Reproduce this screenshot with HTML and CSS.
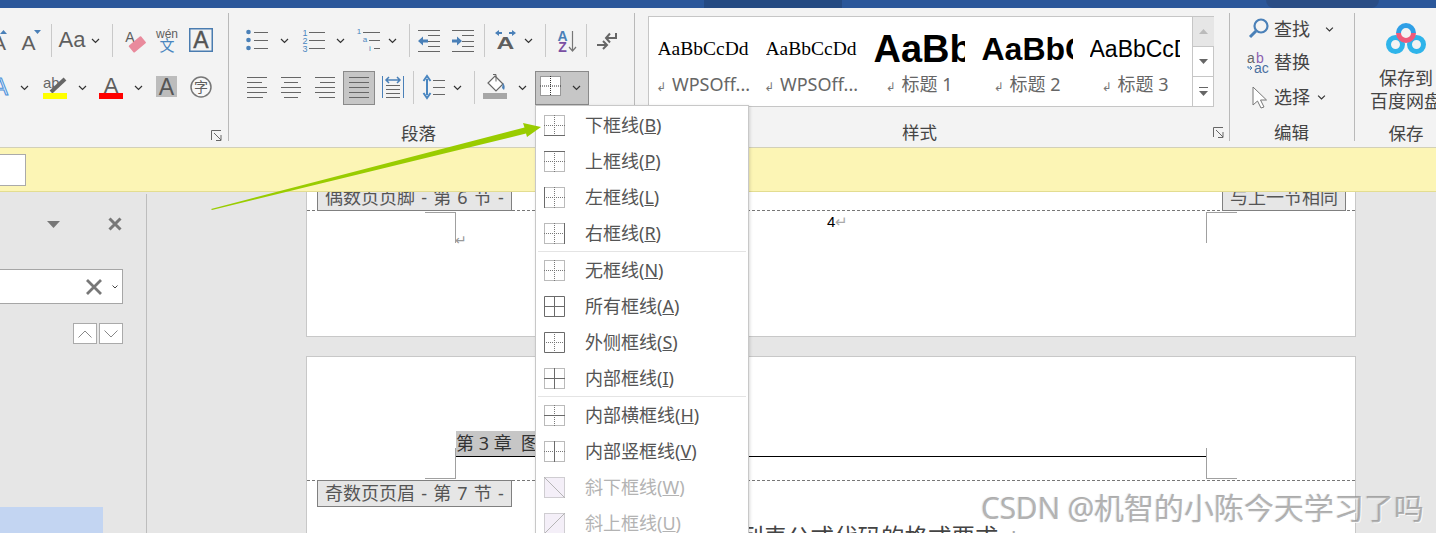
FILE: index.html
```html
<!DOCTYPE html>
<html lang="zh-CN">
<head>
  <meta charset="UTF-8">
  <title>Word - 边框</title>
  <link rel="stylesheet" href="styles.css">
</head>
<body>
  <svg class="defs" width="0" height="0">
    <symbol id="chev" viewBox="0 0 9 34"><path d="M1 15l3.5 3.5L8 15" fill="none" stroke="#333" stroke-width="1.2"/></symbol>
    <symbol id="dots" viewBox="0 0 21 21"><path d="M.5.5h20v20H.5zM10.5 0v21M0 10.5h21" fill="none" stroke="#777" stroke-dasharray="1 1"/></symbol>
    <symbol id="dots-in" viewBox="0 0 21 21"><path d="M10.5 0v21M0 10.5h21" fill="none" stroke="#777" stroke-dasharray="1 1"/></symbol>
  </svg>

  <div class="titlebar">
    <div class="tab-dark"></div>
    <div class="tab-dark2"></div>
  </div>

  <div class="ribbon">
    <!-- font group, cut off by the window on the left -->
    <div class="group g-font">
      <div class="row row-first">
        <svg class="m-10" width="20" height="34"><path d="M10 10h7l-3.5-4z" class="blue"/><text x="9" y="26" font-size="21" class="t-gray">A</text></svg>
        <svg class="m10" width="22" height="34"><path d="M14 6h7l-3.5 4z" class="blue"/><text x="8.5" y="26" font-size="21" class="t-gray">A</text></svg>
        <div class="sep m9"></div>
        <svg class="m7" width="28" height="34"><text x="13" y="23" font-size="22" class="t-gray">Aa</text></svg>
        <svg class="m4" width="9" height="34"><use href="#chev"/></svg>
        <div class="sep m12"></div>
        <svg class="m11" width="22" height="34">
          <text x="6" y="18" font-size="14" class="t-gray">A</text>
          <rect x="5" y="16" width="16" height="9" rx="1" fill="#e98a9c" transform="rotate(-40 13 20)"/>
        </svg>
        <svg class="m10" width="22" height="34">
          <text x="11" y="14" font-size="12" class="t-gray t-med">wén</text>
          <text x="11" y="27" font-size="15" class="t-blue">文</text>
        </svg>
        <svg class="m11" width="24" height="34">
          <rect x=".75" y="4.75" width="22.5" height="22.5" fill="none" stroke="#4a7cb0" stroke-width="1.5"/>
          <text x="12" y="24" font-size="23" fill="#555" stroke="#555" stroke-width=".4">A</text>
        </svg>
      </div>
      <div class="row row-second">
        <svg class="m-10" width="20" height="34"><text x="10" y="24" font-size="24" fill="#e3eefb" stroke="#4a90d9">A</text></svg>
        <svg class="m10" width="9" height="34"><use href="#chev"/></svg>
        <svg class="m14" width="24" height="34">
          <text x="0" y="17" font-size="15" fill="#666" class="t-left">ab</text>
          <path d="M8 21L22 8" stroke="#666" stroke-width="4"/>
          <rect y="22" width="24" height="6" fill="#ff0"/>
        </svg>
        <svg class="m11" width="9" height="34"><use href="#chev"/></svg>
        <svg class="m12" width="24" height="34">
          <text x="12" y="22" font-size="22" class="t-gray">A</text>
          <rect y="22" width="24" height="6" fill="#f00"/>
        </svg>
        <svg class="m11" width="9" height="34"><use href="#chev"/></svg>
        <svg class="m13" width="21" height="34">
          <rect y="5" width="21" height="21" fill="#bcbcbc"/>
          <text x="10.5" y="24" font-size="23" fill="#555">A</text>
        </svg>
        <svg class="m13" width="22" height="34">
          <circle cx="11" cy="16" r="10" fill="#f8f8f8" stroke="#777" stroke-width="1.5"/>
          <text x="11" y="21" font-size="14" class="t-gray">字</text>
        </svg>
      </div>
      <div class="foot">
        <span></span><span class="g-label"></span>
        <svg class="launcher" width="11" height="11"><path d="M.5 10V.5H10M3 3l7 7M10 5v5.5H5" fill="none" stroke="#666"/></svg>
      </div>
    </div>

    <div class="group g-para">
      <div class="row row-first">
        <svg class="m17" width="22" height="34">
          <circle cx="2.5" cy="8" r="2.3" class="blue"/><circle cx="2.5" cy="16" r="2.3" class="blue"/><circle cx="2.5" cy="24" r="2.3" class="blue"/>
          <path d="M8 8.5h14M8 16.5h14M8 24.5h14" class="ln"/>
        </svg>
        <svg class="m12" width="9" height="34"><use href="#chev"/></svg>
        <svg class="m13" width="23" height="34">
          <text x="3" y="12" font-size="9" class="t-blue">1</text><text x="3" y="20" font-size="9" class="t-blue">2</text><text x="3" y="28" font-size="9" class="t-blue">3</text>
          <path d="M7 8.5h16M7 16.5h16M7 24.5h16" class="ln"/>
        </svg>
        <svg class="m11" width="9" height="34"><use href="#chev"/></svg>
        <svg class="m12" width="23" height="34">
          <text x="2" y="10" font-size="8" class="t-blue">1</text><text x="8" y="18" font-size="8" class="t-blue">a</text><text x="13" y="27" font-size="8" class="t-blue">i</text>
          <path d="M6 8.5h17M12 16.5h11M17 24.5h6" class="ln"/>
        </svg>
        <svg class="m8" width="9" height="34"><use href="#chev"/></svg>
        <div class="sep m12"></div>
        <svg class="m8" width="23" height="34">
          <path d="M0 6.5h22M10 11.5h12M10 17.5h12M10 22.5h12M0 27.5h22" class="ln"/>
          <path d="M0 17l5-4.5v3h5v3H5v3z" class="blue"/>
        </svg>
        <svg class="m11" width="23" height="34">
          <path d="M0 6.5h22M10 11.5h12M10 17.5h12M10 22.5h12M0 27.5h22" class="ln"/>
          <path d="M10 17l-5-4.5v3H0v3h5v3z" class="blue"/>
        </svg>
        <div class="sep m9"></div>
        <svg class="m9" width="23" height="34">
          <text transform="translate(11.5 25) scale(1.45 1)" font-size="17" class="t-gray t-bold">A</text>
          <path d="M1 9l4-3v2h3v2H5v2zM22 9l-4-3v2h-3v2h3v2z" class="blue"/>
        </svg>
        <svg class="m7" width="9" height="34"><use href="#chev"/></svg>
        <div class="sep m12"></div>
        <svg class="m11" width="21" height="34">
          <text x="5.5" y="17" font-size="14" fill="#4a80b8" class="t-bold">A</text>
          <text x="5.5" y="28" font-size="14" fill="#7a4fa3" class="t-bold">Z</text>
          <path d="M15.5 7v20M12 23l3.5 4 3.5-4" fill="none" stroke="#777" stroke-width="1.2"/>
        </svg>
        <div class="sep m8"></div>
        <svg class="m10" width="21" height="34">
          <path d="M19 9v5H9M13 9.5l-4 4.5 4 4.5M0 21h9M6 17l4 4-4 4" fill="none" stroke="#666" stroke-width="2"/>
        </svg>
      </div>
      <div class="row row-second">
        <svg class="m18" width="20" height="34"><path d="M0 6.5h20M0 11.5h15M0 16.5h20M0 21.5h20M0 26.5h16" class="ln"/></svg>
        <svg class="m14" width="20" height="34"><path d="M0 6.5h20M3 11.5h14M0 16.5h20M0 21.5h20M3 26.5h14" class="ln"/></svg>
        <svg class="m14" width="20" height="34"><path d="M0 6.5h20M5 11.5h15M0 16.5h20M0 21.5h20M4 26.5h16" class="ln"/></svg>
        <svg class="m8" width="32" height="34">
          <rect x=".5" y=".5" width="31" height="33" class="on"/>
          <path d="M6 6.5h20M6 11.5h20M6 16.5h20M6 21.5h20M6 26.5h20" class="ln"/>
        </svg>
        <svg class="m7" width="22" height="34">
          <path d="M.5 5v22M21.5 5v22" stroke="#4a80b8" fill="none"/>
          <path d="M4 9h14M7 6L4 9l3 3M15 6l3 3-3 3" fill="none" stroke="#4a80b8" stroke-width="1.5"/>
          <path d="M4 14.5h14M4 18.5h14M4 22.5h14M4 26.5h14" class="ln"/>
        </svg>
        <div class="sep m9"></div>
        <svg class="m8" width="23" height="34">
          <path d="M5 8v16M1.5 10L5 5l3.500 5M1.500 22L5 27l3.500-5" fill="none" stroke="#4a86c0" stroke-width="2"/>
          <path d="M11 9.500h12M11 16.500h12M11 23.500h12" class="ln"/>
        </svg>
        <svg class="m8" width="9" height="34"><use href="#chev"/></svg>
        <div class="sep m12"></div>
        <svg class="m8" width="24" height="34">
          <path d="M12 5l8 8-7 7-8-8z" fill="#fff" stroke="#666" stroke-width="1.200"/>
          <path d="M10 3.500h3v7" fill="none" stroke="#666"/>
          <path d="M20 12c2 2 2 5 1 7l-2-2z" class="blue"/>
          <rect y="22" width="24" height="6" fill="#a6a6a6"/>
        </svg>
        <svg class="m11" width="9" height="34"><use href="#chev"/></svg>
        <svg class="m8" width="54" height="34">
          <rect x=".5" y=".5" width="53" height="33" class="on"/>
          <rect x="5" y="5" width="21" height="20" fill="#fff"/>
          <path d="M5.500 5.500h20v19h-20zM15.500 5v20M5 15h21" fill="none" stroke="#333" stroke-dasharray="1 1"/>
          <path d="M38 15l3.500 3.500L45 15" fill="none" stroke="#333" stroke-width="1.200"/>
        </svg>
      </div>
      <div class="foot foot-para"><span></span><span class="g-label">段落</span><span></span></div>
    </div>

    <div class="group g-styles">
      <div class="gallery">
        <div class="style-item"><div class="sample s-serif">AaBbCcDd</div><div class="style-name"><span class="ret">↲</span>WPSOff...</div></div>
        <div class="style-item"><div class="sample s-serif">AaBbCcDd</div><div class="style-name"><span class="ret">↲</span>WPSOff...</div></div>
        <div class="style-item"><div class="sample s-h1">AaBbCc</div><div class="style-name"><span class="ret">↲</span>标题 1</div></div>
        <div class="style-item"><div class="sample s-h2">AaBbCc</div><div class="style-name"><span class="ret">↲</span>标题 2</div></div>
        <div class="style-item"><div class="sample s-h3">AaBbCcDd</div><div class="style-name"><span class="ret">↲</span>标题 3</div></div>
        <div class="gallery-scroll">
          <div class="gs-btn gs-up"><svg width="9" height="5"><path d="M0 5h9L4.500 0z" fill="#bbb"/></svg></div>
          <div class="gs-btn"><svg width="9" height="5"><path d="M0 0h9L4.500 5z" fill="#666"/></svg></div>
          <div class="gs-btn gs-more"><svg width="9" height="9"><path d="M0 .5h9" stroke="#666"/><path d="M0 4h9L4.500 9z" fill="#666"/></svg></div>
        </div>
      </div>
      <div class="foot foot-styles">
        <span></span><span class="g-label">样式</span>
        <svg class="launcher" width="11" height="11"><path d="M.5 10V.5H10M3 3l7 7M10 5v5.500H5" fill="none" stroke="#666"/></svg>
      </div>
    </div>

    <div class="group g-edit">
      <div class="edit-row">
        <svg width="22" height="33"><circle cx="14" cy="13" r="6.500" fill="none" stroke="#4a80b8" stroke-width="2.200"/><path d="M9 18l-6 6" stroke="#4a80b8" stroke-width="3"/></svg>
        <span class="edit-txt">查找</span>
        <svg class="m15" width="9" height="33"><use href="#chev"/></svg>
      </div>
      <div class="edit-row">
        <svg width="22" height="33">
          <text x="0" y="17" font-size="14" fill="#666" class="t-left">a</text><text x="9" y="17" font-size="14" fill="#8a5fb0" class="t-left">b</text>
          <path d="M1 20v2h4M3 20l2 2-2 2" fill="none" stroke="#4a80b8"/>
          <text x="7" y="27" font-size="14" fill="#4a70a0" class="t-left">ac</text>
        </svg>
        <span class="edit-txt">替换</span>
      </div>
      <div class="edit-row edit-row-last">
        <svg width="22" height="33"><path d="M6 6v18l4.500-4 3.500 7 3-1-3.500-7h6z" fill="#fff" stroke="#777"/></svg>
        <span class="edit-txt">选择</span>
        <svg class="m7" width="9" height="33"><use href="#chev"/></svg>
      </div>
      <div class="foot foot-edit"><span class="g-label">编辑</span></div>
    </div>

    <div class="group g-save">
      <svg class="cloud" width="40" height="30" viewBox="0 0 40 30">
        <g fill="none" stroke-width="5">
          <circle cx="9.500" cy="20.500" r="7" stroke="#2fb4ea"/>
          <circle cx="30.500" cy="20.500" r="7" stroke="#2fb4ea"/>
          <path d="M12.500 9a7.500 7.500 0 0 1 15 0" stroke="#2f9fe6"/>
          <path d="M27.500 9a7.500 7.500 0 0 1-15 0" stroke="#ef5a7a"/>
        </g>
      </svg>
      <div class="save-txt">保存到<br>百度网盘</div>
      <div class="foot foot-save"><span class="g-label">保存</span></div>
    </div>
  </div>

  <div class="msgbar"><div class="msg-input"></div></div>

  <div class="workspace">
    <div class="navpane">
      <div class="nav-head">
        <svg class="nav-caret" width="13" height="7"><path d="M0 0h13L6.500 7z" fill="#777"/></svg>
        <svg width="14" height="16"><path d="M1.500 2.500l11 11M12.500 2.500l-11 11" stroke="#777" stroke-width="3"/></svg>
      </div>
      <div class="nav-search">
        <svg width="16" height="16"><path d="M1 1l14 14M15 1L1 15" stroke="#777" stroke-width="2.800"/></svg>
        <svg class="m10" width="6" height="4"><path d="M.5.500L3 3 5.500.500" fill="none" stroke="#444"/></svg>
      </div>
      <div class="nav-arrows">
        <div class="nav-btn"><svg width="14" height="8"><path d="M.5 7.500L7 1l6.500 6.500" fill="none" stroke="#888"/></svg></div>
        <div class="nav-btn"><svg width="14" height="8"><path d="M.5.500L7 7 13.500.500" fill="none" stroke="#888"/></svg></div>
      </div>
      <div class="nav-hit"></div>
    </div>

    <div class="doc">
      <div class="page page-one">
        <div class="band">
          <div class="tag">偶数页页脚 - 第 6 节 -</div>
          <div class="tag">与上一节相同</div>
        </div>
        <div class="pagenum">4<span class="pm">↵</span></div>
        <div class="crop crop-tl"></div>
        <div class="crop crop-tr"></div>
        <span class="crop-ret">↵</span>
      </div>

      <div class="page page-two">
        <div class="band band-head">
          <div class="chapter"><span class="chapter-txt">第 3 章&nbsp; 图表公式代码</span></div>
          <div class="crop crop-bl"></div>
          <div class="crop crop-br"></div>
        </div>
        <div class="tagrow"><div class="tag">奇数页页眉 - 第 7 节 -</div></div>
        <div class="bodytext">列表公式代码的格式要求<span class="pm">↵</span></div>
      </div>
    </div>
  </div>

  <div class="menu">
    <div class="mi"><svg width="21" height="21"><use href="#dots"/><path d="M0 20.500h21" class="solid"/></svg><span>下框线(<u>B</u>)</span></div>
    <div class="mi"><svg width="21" height="21"><use href="#dots"/><path d="M0 .5h21" class="solid"/></svg><span>上框线(<u>P</u>)</span></div>
    <div class="mi"><svg width="21" height="21"><use href="#dots"/><path d="M.5 0v21" class="solid"/></svg><span>左框线(<u>L</u>)</span></div>
    <div class="mi"><svg width="21" height="21"><use href="#dots"/><path d="M20.500 0v21" class="solid"/></svg><span>右框线(<u>R</u>)</span></div>
    <div class="mi-sep"></div>
    <div class="mi"><svg width="21" height="21"><use href="#dots"/></svg><span>无框线(<u>N</u>)</span></div>
    <div class="mi"><svg width="21" height="21"><path d="M.5.5h20v20H.5zM10.500 0v21M0 10.500h21" class="solid"/></svg><span>所有框线(<u>A</u>)</span></div>
    <div class="mi"><svg width="21" height="21"><use href="#dots-in"/><path d="M.5.5h20v20H.5z" class="solid"/></svg><span>外侧框线(<u>S</u>)</span></div>
    <div class="mi"><svg width="21" height="21"><use href="#dots"/><path d="M10.500 0v21M0 10.500h21" class="solid"/></svg><span>内部框线(<u>I</u>)</span></div>
    <div class="mi-sep"></div>
    <div class="mi"><svg width="21" height="21"><use href="#dots"/><path d="M0 10.500h21" class="solid"/></svg><span>内部横框线(<u>H</u>)</span></div>
    <div class="mi"><svg width="21" height="21"><use href="#dots"/><path d="M10.500 0v21" class="solid"/></svg><span>内部竖框线(<u>V</u>)</span></div>
    <div class="mi mi-off"><svg width="21" height="21"><rect width="21" height="21" fill="#f4eff8"/><path d="M.5.5h20v20H.5z" class="dotted-off"/><path d="M0 0l21 21" class="solid-off"/></svg><span>斜下框线(<u>W</u>)</span></div>
    <div class="mi mi-off"><svg width="21" height="21"><rect width="21" height="21" fill="#f4eff8"/><path d="M.5.5h20v20H.5z" class="dotted-off"/><path d="M0 21L21 0" class="solid-off"/></svg><span>斜上框线(<u>U</u>)</span></div>
  </div>

  <svg class="arrow" width="345" height="105" viewBox="205 110 345 105">
    <path d="M211 209L524.500 127.500L523 123L541 127L527 137L526 133.500L212 210z" fill="#99cc00"/>
  </svg>

  <div class="watermark"><span class="wm-latin">CSDN @</span>机智的小陈今天学习了吗</div>
</body>
</html>
```

FILE: styles.css
```css
* { margin: 0; padding: 0; box-sizing: border-box; }
html, body { height: 533px; overflow: hidden; }
body {
  position: relative;
  font-family: "Noto Sans", "Noto Sans CJK SC", sans-serif;
  background: #e6e6e6;
  color: #444;
  display: flex;
  flex-direction: column;
}
svg { display: block; flex: none; overflow: visible; }
svg text { font-family: "Liberation Sans", "Noto Sans CJK SC", sans-serif; text-anchor: middle; }
.defs { position: absolute; }

.titlebar { height: 8px; flex: none; background: #2b579a; display: flex; }
.tab-dark { width: 138px; margin-left: 704px; background: #254a82; }
.tab-dark2 { width: 113px; margin-left: 424px; background: #2a4d85; border-radius: 0 0 14px 14px; }

/* ribbon */
.ribbon {
  height: 140px;
  flex: none;
  background: #f3f3f3;
  border-bottom: 1px solid #d2d0b8;
  display: flex;
  align-items: flex-start;
}
.group {
  flex: none;
  height: 128px;
  margin-top: 5px;
  border-right: 1px solid #b9b9b9;
  padding-top: 11px;
  display: flex;
  flex-direction: column;
}
.g-font { width: 229px; }
.g-para { width: 406px; }
.g-styles { width: 595px; padding: 3px 0 0 13px; }
.g-edit { width: 125px; padding: 0 0 0 17px; }
.g-save { width: 102px; border-right: none; align-items: center; }

.row { display: flex; height: 34px; flex: none; }
.row-second { margin-top: 13px; }
.foot {
  height: 20px;
  margin-top: 18px;
  flex: none;
  display: grid;
  grid-template-columns: 1fr auto 1fr;
  align-items: end;
  padding-right: 6px;
}
.foot-para { grid-template-columns: 172px auto 1fr; }
.foot-styles { grid-template-columns: 267px auto 1fr; margin-top: 15px; padding-right: 5px; margin-left: -13px; }
.foot-edit { display: block; margin-top: 8px; padding-left: 27px; }
.foot-save { display: block; margin-top: 10px; padding: 0; }
.g-label { font-size: 17.5px; line-height: 20px; color: #444; white-space: nowrap; }
.launcher { justify-self: end; margin-bottom: 2px; }
.foot-styles .launcher { margin-bottom: 4px; }

.sep { width: 1px; height: 33px; background: #c9c9c9; flex: none; }
.m-10 { margin-left: -10px; }
.m4 { margin-left: 4px; }
.m7 { margin-left: 7px; }
.m8 { margin-left: 8px; }
.m9 { margin-left: 9px; }
.m10 { margin-left: 10px; }
.m11 { margin-left: 11px; }
.m12 { margin-left: 12px; }
.m13 { margin-left: 13px; }
.m14 { margin-left: 14px; }
.m15 { margin-left: 15px; }
.m17 { margin-left: 17px; }
.m18 { margin-left: 18px; }

.blue { fill: #4a80b8; }
.ln { fill: none; stroke: #666; stroke-width: 1; }
.on { fill: #c6c6c6; stroke: #8a8a8a; }
.t-gray { fill: #5f5f5f; }
.t-blue { fill: #4a86c0; }
.t-med { font-weight: 500; }
.t-bold { font-weight: 700; }
svg .t-left { text-anchor: start; }

/* styles gallery */
.gallery {
  width: 566px;
  height: 91px;
  flex: none;
  background: #fff;
  border: 1px solid #c6c6c6;
  display: flex;
}
.style-item { width: 108px; flex: none; display: flex; flex-direction: column; align-items: center; }
.sample {
  width: 91px;
  height: 46px;
  margin-top: 9px;
  overflow: hidden;
  white-space: nowrap;
  color: #000;
  line-height: 46px;
}
.s-serif { font-family: "Liberation Serif", serif; font-size: 19.500px; }
.s-h1 { font-family: "Liberation Sans", sans-serif; font-weight: 700; font-size: 38px; }
.s-h2 { font-family: "Liberation Sans", sans-serif; font-weight: 700; font-size: 32px; }
.s-h3 { font-family: "Liberation Sans", sans-serif; font-size: 23px; width: 90px; margin-right: 1px; }
.style-name { font-size: 18px; line-height: 24px; color: #666; white-space: nowrap; }
.ret { font-size: 12px; margin-right: 6px; color: #777; font-family: "DejaVu Sans", sans-serif; }
.gallery-scroll {
  margin-left: 3px;
  width: 22px;
  flex: none;
  display: flex;
  flex-direction: column;
  border-left: 1px solid #c6c6c6;
}
.gs-btn { flex: 1; display: flex; align-items: center; justify-content: center; border-bottom: 1px solid #c6c6c6; }
.gs-btn:last-child { border-bottom: none; }
.gs-up { background: #e6e6e6; }

/* edit + save */
.edit-row { height: 33px; flex: none; display: flex; align-items: center; }
.edit-row-last { margin-top: 2px; }
.edit-txt { font-size: 18px; line-height: 33px; margin-left: 5px; color: #444; }
.g-edit .foot { height: 20px; }
.cloud { flex: none; }
.save-txt { font-size: 18px; line-height: 23px; margin-top: 13px; text-align: center; white-space: nowrap; color: #444; }

/* message bar */
.msgbar {
  height: 44px;
  flex: none;
  background: #fcf5b5;
  border-bottom: 1px solid #e3dd91;
  display: flex;
  align-items: center;
}
.msg-input { width: 27px; height: 32px; margin-left: -1px; background: #fff; border: 1px solid #aaa; }

/* document area */
.workspace { flex: 1; min-height: 0; display: flex; overflow: hidden; background: #e6e6e6; }
.navpane {
  width: 147px;
  flex: none;
  margin-top: 2px;
  padding-top: 22px;
  border-right: 1px solid #bdbdbd;
  display: flex;
  flex-direction: column;
  overflow: hidden;
}
.nav-head { height: 16px; flex: none; padding-right: 24px; display: flex; justify-content: flex-end; align-items: center; }
.nav-caret { margin-right: 48px; }
.nav-search {
  width: 124px;
  height: 35px;
  flex: none;
  margin: 37px 0 0 -1px;
  padding-right: 4px;
  background: #fff;
  border: 1px solid #a6a6a6;
  display: flex;
  justify-content: flex-end;
  align-items: center;
}
.nav-arrows { width: 123px; margin-top: 19px; flex: none; display: flex; justify-content: flex-end; gap: 2px; }
.nav-btn { width: 24px; height: 21px; background: #fff; border: 1px solid #aaa; display: flex; align-items: center; justify-content: center; }
.nav-hit { width: 103px; height: 26px; flex: none; margin-top: auto; background: #c3d5f2; }

.doc { flex: 1; padding-left: 159px; overflow: hidden; }
.page {
  position: relative;
  width: 1050px;
  background: #fff;
  border: 1px solid #c8c8c8;
}
.page-one { height: 165px; margin-top: -20px; }
.page-two { height: 240px; margin-top: 19px; }
.band {
  height: 38px;
  padding: 0 9px 0 10px;
  border-bottom: 1px dashed #777;
  display: flex;
  justify-content: space-between;
  align-items: flex-end;
}
.tag {
  height: 27px;
  padding: 0 7px;
  background: #e6e6e6;
  border: 1px solid #808080;
  font-size: 18px;
  line-height: 25px;
  word-spacing: 1.5px;
  color: #555;
  white-space: nowrap;
}
.band .tag { margin-bottom: -1px; }
.pagenum { margin: 3px 0 0 520px; font: 15px/16px "Liberation Sans", sans-serif; color: #000; }
.pm { color: #aaa; }
.crop { position: absolute; width: 31px; height: 31px; border: 0 solid #a0a0a0; }
.crop-tl { left: 118px; top: 39px; border-width: 1px 1px 0 0; }
.crop-tr { left: 899px; top: 39px; border-width: 1px 0 0 1px; }
.crop-bl { left: 118px; top: 91px; border-width: 0 1px 1px 0; }
.crop-br { left: 899px; top: 91px; border-width: 0 0 1px 1px; }
.crop-ret { position: absolute; left: 148px; top: 59px; font: 14px/16px "DejaVu Sans", sans-serif; color: #999; }

.band-head { display: block; height: 124px; padding: 74px 0 0 149px; position: static; }
.chapter { width: 751px; height: 26px; border-bottom: 1px solid #000; }
.chapter-txt { display: inline-block; height: 25px; font-size: 18px; line-height: 25px; color: #333; background: #c6c6c6; white-space: nowrap; }
.tagrow { padding-left: 10px; margin-top: -1px; display: flex; }
.bodytext { margin: 15px 0 0 433px; font-size: 23.500px; line-height: 30px; color: #444; white-space: nowrap; }

/* borders dropdown */
.menu {
  position: absolute;
  left: 535px;
  top: 105px;
  width: 214px;
  padding: 1px;
  background: #fff;
  border: 1px solid #c8c8c8;
  box-shadow: 1px 1px 3px rgba(0, 0, 0, .15);
}
.mi { height: 36px; display: flex; align-items: center; padding-left: 7px; font-size: 18px; color: #555; white-space: nowrap; }
.mi span { margin: -2px 0 0 20px; }
.mi-sep { height: 1px; margin: 0 1px; background: #e4e4e4; }
.mi-off { color: #b3b3b3; }
.solid { fill: none; stroke: #6a6a6a; }
.solid-off { fill: none; stroke: #b5b5b5; }
.dotted-off { fill: none; stroke: #aaa; stroke-dasharray: 1 1; }

.arrow { position: absolute; left: 205px; top: 110px; }
.watermark {
  position: absolute;
  left: 981px;
  top: 488px;
  font-size: 30px;
  line-height: 40px;
  color: rgba(140, 140, 140, .65);
  text-shadow: 1px 1px 0 rgba(255, 255, 255, .8), -1px 0 1px rgba(150, 150, 150, .3);
  white-space: nowrap;
}
.wm-latin { letter-spacing: -.3px; }
```
